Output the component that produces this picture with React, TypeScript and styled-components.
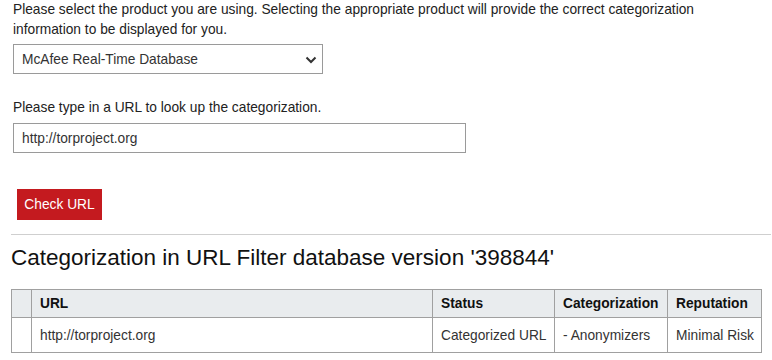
import React, { useState } from "react";
import styled, { createGlobalStyle } from "styled-components";

const GlobalStyle = createGlobalStyle`
  body {
    margin: 0;
    background: #fff;
    font-family: "Liberation Sans", Arial, sans-serif;
    color: #222;
  }
`;

const Page = styled.div`
  width: 772px;
  padding: 0 0 0 11px;
  box-sizing: border-box;
`;

const Form = styled.div`
  padding-left: 2px;
  width: 740px;
`;

const Text = styled.p<{ $gap?: number }>`
  margin: ${(p) => p.$gap ?? 0}px 0 0;
  font-size: 13.75px;
  line-height: 20px;
  color: #222;
`;

const SelectWrap = styled.div`
  position: relative;
  width: 310px;
  margin-top: 4px;
`;

const Select = styled.select`
  appearance: none;
  width: 310px;
  height: 30px;
  box-sizing: border-box;
  border: 1px solid #9a9a9a;
  border-radius: 0;
  background: #fff;
  padding: 0 30px 0 8px;
  font-family: "Liberation Sans", Arial, sans-serif;
  font-size: 13.75px;
  color: #333;
`;

const Chevron = styled.svg`
  position: absolute;
  right: 6px;
  top: 12px;
  pointer-events: none;
`;

const UrlInput = styled.input`
  display: block;
  width: 453px;
  height: 30px;
  box-sizing: border-box;
  margin-top: 5px;
  border: 1px solid #9a9a9a;
  padding: 0 8px;
  font-family: "Liberation Sans", Arial, sans-serif;
  font-size: 13.75px;
  color: #333;
  outline: none;
`;

const CheckButton = styled.button`
  display: block;
  margin: 36px 0 0 4px;
  width: 85px;
  height: 31px;
  border: none;
  background: #c41a1f;
  color: #fff;
  font-family: "Liberation Sans", Arial, sans-serif;
  font-size: 13.75px;
  padding: 0;
  cursor: pointer;
`;

const Divider = styled.hr`
  margin: 14px 0 0;
  border: none;
  border-top: 1px solid #cfcfcf;
  height: 0;
  width: 760px;
`;

const Heading = styled.h2`
  margin: 9px 0 0;
  font-size: 22.5px;
  line-height: 28px;
  font-weight: normal;
  color: #111;
`;

const Table = styled.table`
  margin-top: 17px;
  border-collapse: collapse;
  table-layout: fixed;
  width: 750px;
  font-size: 13.75px;
`;

const HeadCell = styled.th`
  height: 27px;
  padding: 0 8px;
  text-align: left;
  background: #e9ecee;
  border: 1px solid #a0a0a0;
  color: #111;
  font-weight: bold;
  white-space: nowrap;
`;

const Cell = styled.td`
  height: 34px;
  padding: 0 8px;
  border: 1px solid #a0a0a0;
  color: #333;
  white-space: nowrap;
`;

const columns = [
  { label: "", w: 20 },
  { label: "URL", w: 401 },
  { label: "Status", w: 122 },
  { label: "Categorization", w: 113 },
  { label: "Reputation", w: 94 },
];

const App = () => {
  const [product, setProduct] = useState("rtdb");
  const [url, setUrl] = useState("http://torproject.org");

  return (
    <Page>
      <GlobalStyle />
      <Form>
        <Text>
          Please select the product you are using. Selecting the appropriate product will provide the
          correct categorization information to be displayed for you.
        </Text>
        <SelectWrap>
          <Select value={product} onChange={(e) => setProduct(e.target.value)}>
            <option value="rtdb">McAfee Real-Time Database</option>
          </Select>
          <Chevron width="12" height="8" viewBox="0 0 12 8">
            <path d="M1.5 1.5 L6 6 L10.5 1.5" fill="none" stroke="#333" strokeWidth="2" />
          </Chevron>
        </SelectWrap>
        <Text $gap={24}>Please type in a URL to look up the categorization.</Text>
        <UrlInput value={url} onChange={(e) => setUrl(e.target.value)} />
        <CheckButton>Check URL</CheckButton>
      </Form>
      <Divider />
      <Heading>Categorization in URL Filter database version '398844'</Heading>
      <Table>
        <colgroup>
          {columns.map((c, i) => (
            <col key={i} width={c.w} />
          ))}
        </colgroup>
        <thead>
          <tr>
            {columns.map((c, i) => (
              <HeadCell key={i}>{c.label}</HeadCell>
            ))}
          </tr>
        </thead>
        <tbody>
          <tr>
            <Cell />
            <Cell>http://torproject.org</Cell>
            <Cell>Categorized URL</Cell>
            <Cell>- Anonymizers</Cell>
            <Cell>Minimal Risk</Cell>
          </tr>
        </tbody>
      </Table>
    </Page>
  );
};

export default App;
